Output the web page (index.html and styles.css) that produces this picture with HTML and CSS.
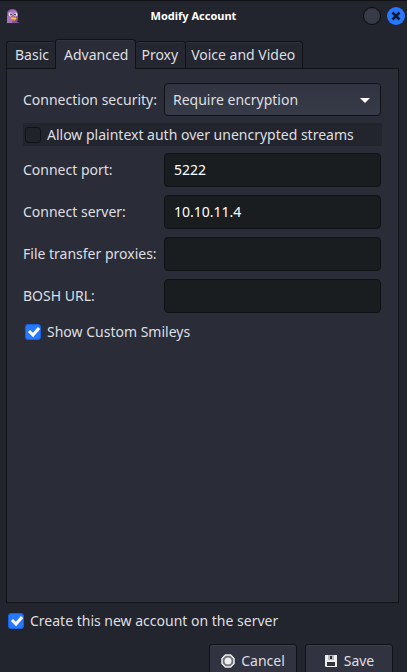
FILE: index.html
```html
<!DOCTYPE html>
<html lang="en">
<head>
<meta charset="utf-8">
<title>Modify Account</title>
<link rel="stylesheet" href="styles.css">
</head>
<body>
<form class="window">
  <header class="titlebar">
    <svg class="app-icon" viewBox="0 0 14 16" aria-hidden="true">
      <path d="M1 15V6C1 2.500 3.500 1 6.500 1S12 3 12 6v5l-1 3 3 1z" fill="#84509a"/>
      <path d="M2 6c0-3 2-4 4.500-4S11 3.500 11 6z" fill="#a778bd"/>
      <path d="M1 8h4l2 4-1 3H1z" fill="#a675b8"/>
      <circle cx="4.500" cy="6.500" r="2" fill="#eee6ee"/>
      <circle cx="9.500" cy="6.500" r="2" fill="#eee6ee"/>
      <circle cx="5" cy="6.500" r="1" fill="#3c2949"/>
      <circle cx="9" cy="6.500" r="1" fill="#3c2949"/>
      <path d="M7 8l4 2.500L8.500 13l-4-2.500z" fill="#ee8a28"/>
      <path d="M5 10l3 1 2-1" fill="none" stroke="#ffd16b"/>
      <path d="M0 15.500h14" stroke="#4b173e"/>
    </svg>
    <h1 class="title">Modify Account</h1>
    <div class="window-controls">
      <button class="round" type="button" aria-label="Maximize"></button>
      <button class="round close" type="button" aria-label="Close">
        <svg viewBox="0 0 18 18" aria-hidden="true"><path d="M5.500 5.500l7 7M12.500 5.500l-7 7" stroke="#10182a" stroke-width="2.500"/></svg>
      </button>
    </div>
  </header>
  <div class="tabs" role="tablist">
    <button class="tab" type="button" role="tab" aria-selected="false">Basic</button>
    <button class="tab active" type="button" role="tab" aria-selected="true">Advanced</button>
    <button class="tab" type="button" role="tab" aria-selected="false">Proxy</button>
    <button class="tab" type="button" role="tab" aria-selected="false">Voice and Video</button>
  </div>
  <section class="panel" role="tabpanel">
    <div class="row">
      <label for="security">Connection security:</label>
      <div class="select-wrap">
        <select id="security"><option>Require encryption</option></select>
        <svg class="arrow" viewBox="0 0 10 5" aria-hidden="true"><path d="M0 0h10L5 5z" fill="#fff"/></svg>
      </div>
    </div>
    <label class="check hover"><input type="checkbox"><span>Allow plaintext auth over unencrypted streams</span></label>
    <div class="row"><label for="port">Connect port:</label><input class="field" id="port" type="text" value="5222"></div>
    <div class="row"><label for="server">Connect server:</label><input class="field" id="server" type="text" value="10.10.11.4"></div>
    <div class="row"><label for="proxies">File transfer proxies:</label><input class="field" id="proxies" type="text"></div>
    <div class="row"><label for="bosh">BOSH URL:</label><input class="field" id="bosh" type="text"></div>
    <label class="check"><input type="checkbox" checked><span>Show Custom Smileys</span></label>
  </section>
  <footer class="footer">
    <label class="check"><input type="checkbox" checked><span>Create this new account on the server</span></label>
    <div class="actions">
      <button class="action" type="button">
        <svg viewBox="0 0 14 14" aria-hidden="true"><path d="M4.500 1h5L13 4.500v5L9.500 13h-5L1 9.500v-5z" fill="#6d7079" stroke="#eeeeec" stroke-width="1.500"/><circle cx="7" cy="7" r="3.500" fill="#eeeeec"/></svg>
        Cancel
      </button>
      <button class="action" type="button">
        <svg viewBox="0 0 14 14" aria-hidden="true"><path fill-rule="evenodd" d="M1 1h12v12H2l-1-1zM4 1v5h6V1zM3 8v4h8V8z" fill="#eeeeec"/><path d="M4 1h6v5H4z" fill="#b9bbc1"/><path d="M6 2h2v3H6z" fill="#2a2e39"/></svg>
        Save
      </button>
    </div>
  </footer>
</form>
</body>
</html>
```
FILE: styles.css
```css
* { box-sizing: border-box; }
html { height: 100%; overflow: hidden; }
body {
  margin: 0;
  background: #23252e;
  color: #dedfe1;
  font: 14px/20px "Noto Sans", sans-serif;
}
button, input, select { font: inherit; color: inherit; margin: 0; }

.window {
  display: flex;
  flex-direction: column;
  height: calc(100vh + 6px);
  border-top: 1px solid #101218;
}

.titlebar {
  display: grid;
  grid-template-columns: 24px 1fr 48px;
  align-items: center;
  height: 30px;
  padding: 0 2px 0 6px;
}
.app-icon { width: 14px; height: 16px; }
.title {
  margin: 0;
  text-align: center;
  font-size: 11px;
  font-weight: 700;
  color: #fff;
}
.window-controls { display: flex; justify-content: flex-end; gap: 6px; }
.round {
  width: 18px;
  height: 18px;
  padding: 0;
  border: 1px solid #090a0e;
  border-radius: 50%;
  background: #373a47;
}
.round svg { display: block; width: 18px; height: 18px; }
.close { border: 0; background: #2777ff; }

.tabs {
  display: flex;
  align-items: flex-end;
  height: 37px;
  padding: 0 6px;
}
.tab {
  height: 27px;
  padding: 0 7px 0 5px;
  border: 1px solid #101218;
  border-bottom: 0;
  border-radius: 3px 3px 0 0;
  background: #242630;
  box-shadow: inset 0 1px #30333e;
}
.tab + .tab { border-left: 0; }
.tab:first-child { padding: 0 6px 0 8px; border-right: 0; }
.tab.active {
  position: relative;
  height: 30px;
  margin-bottom: -1px;
  padding: 0 7px 0 8px;
  border-left: 1px solid #101218;
  background: #2a2c37;
}

.panel {
  display: flex;
  flex: 1;
  flex-direction: column;
  gap: 8px;
  margin: 0 8px 0 6px;
  padding: 14px 17px 14px 16px;
  border: 1px solid #101218;
  background: #2a2c37;
}
.row {
  display: grid;
  grid-template-columns: 141px 1fr;
  align-items: center;
  white-space: nowrap;
}
.select-wrap { position: relative; }
select, .field {
  display: block;
  width: 100%;
  height: 34px;
  border: 1px solid #101218;
  border-radius: 4px;
  outline: 0;
}
select {
  height: 33px;
  padding: 0 8px;
  appearance: none;
  background: linear-gradient(#313440, #373a48);
}
.field {
  padding: 0 9px 1px;
  background: #1a1d20;
  color: #fff;
}
.arrow { position: absolute; right: 11px; top: 15px; width: 10px; height: 5px; }

.check {
  display: flex;
  align-items: center;
  gap: 6px;
  height: 23px;
  padding: 0 2px;
}
.panel .check { margin-top: -1px; margin-bottom: -1px; }
.hover { margin-right: -1px; background: #23252e; }
.check input {
  width: 16px;
  height: 16px;
  border: 1px solid #101218;
  border-radius: 3px;
  appearance: none;
  background: #202329;
}
.check input:checked {
  border-color: #1862e5;
  background: #2777ff url("data:image/svg+xml,%3Csvg xmlns='http://www.w3.org/2000/svg' viewBox='0 0 14 14'%3E%3Cpath d='M3 6l4 4 6-7' fill='none' stroke='white' stroke-width='3'/%3E%3C/svg%3E") center / 14px 14px no-repeat;
}

.footer { padding: 6px 14px 0 6px; }
.actions {
  display: flex;
  justify-content: flex-end;
  gap: 8px;
  margin-top: 12px;
}
.action {
  display: flex;
  align-items: center;
  justify-content: center;
  gap: 6px;
  width: 88px;
  height: 34px;
  padding: 0;
  border: 1px solid #101218;
  border-radius: 3px;
  background: #313440;
  box-shadow: inset 0 1px #3a3d49;
}
.action svg { width: 14px; height: 14px; }
```
